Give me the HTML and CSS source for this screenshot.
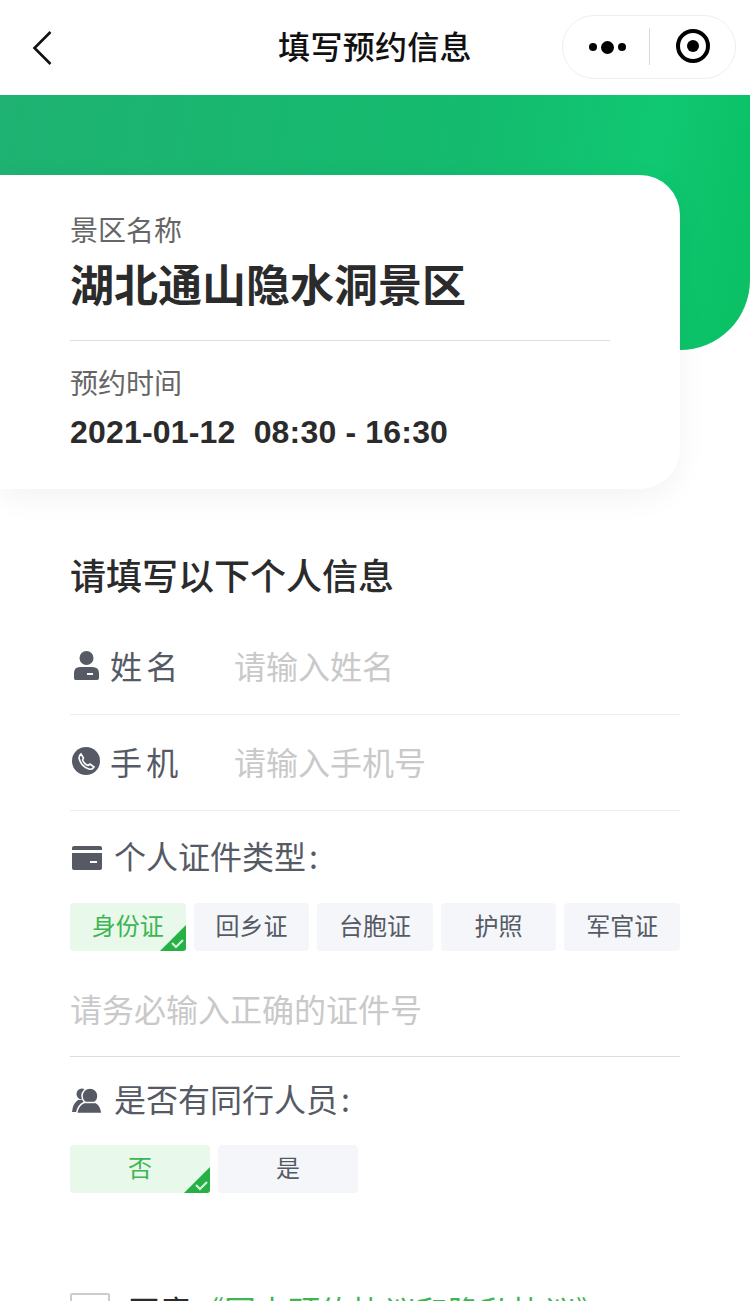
FILE: index.html
```html
<!DOCTYPE html>
<html>
    <head>
        <title>填写预约信息</title>
        <link rel="stylesheet" href="styles.css">
    </head>
    <body>
        <div class="page">
            <div class="navbar">
                <svg class="back" width="20" height="34" viewBox="0 0 20 34"><path d="M18.5 1 L2.5 17 L18.5 33" fill="none" stroke="#111" stroke-width="2.6"/></svg>
                <div class="nav-title">填写预约信息</div>
                <div class="capsule">
                    <div class="capsule-dots">
                        <span class="dot"></span><span class="dot dot-big"></span><span class="dot"></span>
                    </div>
                    <div class="capsule-line"></div>
                    <div class="capsule-target"><span></span></div>
                </div>
            </div>

            <div class="hero">
                <div class="hero-green"></div>
                <div class="card">
                    <div class="card-label">景区名称</div>
                    <div class="card-name">湖北通山隐水洞景区</div>
                    <hr class="card-line">
                    <div class="card-label card-label-time">预约时间</div>
                    <div class="card-time">2021-01-12&nbsp;&nbsp;08:30 - 16:30</div>
                </div>
            </div>

            <form class="info-form">
                <h2 class="form-title">请填写以下个人信息</h2>

                <div class="row">
                    <svg class="icon" width="28" height="30" viewBox="0 0 28 30"><circle cx="14.5" cy="8" r="7" fill="#555a65"/><path d="M3.5 30 Q2 30 2 28 V23 Q2 17 8 17 H20 Q27 17 27 23 V28 Q27 30 25 30 Z" fill="#555a65"/><rect x="15" y="23" width="6" height="2" fill="#fff"/></svg>
                    <label class="row-label">姓 名</label>
                    <span class="placeholder">请输入姓名</span>
                </div>
                <div class="row row-phone">
                    <svg class="icon" width="28" height="28" viewBox="0 0 28 28"><circle cx="14" cy="14" r="14" fill="#555a65"/><path d="M9 7 L11.5 11 L10.5 13 Q12 17 16 18.5 L18 17 L22 20 Q20 23 17 22 Q9 19.5 7 11 Q7 8.5 9 7 Z" fill="none" stroke="#fff" stroke-width="1.6"/></svg>
                    <label class="row-label">手 机</label>
                    <span class="placeholder">请输入手机号</span>
                </div>

                <div class="sub-title sub-title-id">
                    <svg class="icon-wide" width="30" height="24" viewBox="0 0 30 24"><path d="M2 0 H28 Q30 0 30 2 V4 H0 V2 Q0 0 2 0 Z M0 7 H30 V22 Q30 24 28 24 H2 Q0 24 0 22 Z" fill="#555a65"/><rect x="18" y="15" width="7" height="2" fill="#fff"/></svg>
                    <span>个人证件类型<span class="colon">:</span></span>
                </div>
                <div class="chips chips-id">
                    <div class="chip chip-on">身份证
                        <svg class="chip-tick" width="26" height="26" viewBox="0 0 26 26"><path d="M26 0 V23 Q26 26 23 26 H0 Z" fill="#25b143"/><path d="M12 18 L16 22 L23 15" fill="none" stroke="#d6f2dc" stroke-width="2.2"/></svg>
                    </div>
                    <div class="chip">回乡证</div>
                    <div class="chip">台胞证</div>
                    <div class="chip">护照</div>
                    <div class="chip">军官证</div>
                </div>
                <div class="id-input"><span class="placeholder">请务必输入正确的证件号</span></div>

                <div class="sub-title sub-title-with">
                    <svg class="icon-wide" width="30" height="26" viewBox="0 0 30 26"><circle cx="10" cy="6" r="5.5" fill="#555a65"/><path d="M0 24 Q1 15 6 12 H14 L14 24 Z" fill="#555a65"/><circle cx="18" cy="8" r="8" fill="#555a65" stroke="#fff" stroke-width="1.5"/><path d="M4.5 25.5 Q6 17 12 14.5 H24 Q29 17 30 25.5 Z" fill="#555a65" stroke="#fff" stroke-width="1.5"/></svg>
                    <span>是否有同行人员<span class="colon">:</span></span>
                </div>
                <div class="chips chips-with">
                    <div class="chip chip-wide chip-on">否
                        <svg class="chip-tick" width="26" height="26" viewBox="0 0 26 26"><path d="M26 0 V23 Q26 26 23 26 H0 Z" fill="#25b143"/><path d="M12 18 L16 22 L23 15" fill="none" stroke="#d6f2dc" stroke-width="2.2"/></svg>
                    </div>
                    <div class="chip chip-wide">是</div>
                </div>

                <div class="agree">
                    <span class="checkbox"></span>
                    <span class="agree-text">同意<a class="agree-link">《国内预约协议和隐私协议》</a></span>
                </div>
            </form>
        </div>
    </body>
</html>
```

FILE: styles.css
```css
* {
    box-sizing: border-box;
}

html, body {
    margin: 0;
    height: 100%;
}

body {
    font-family: "Noto Sans CJK SC", "Liberation Sans", sans-serif;
    background-color: #fff;
    color: #2b2b2b;
}

.page {
    width: 750px;
    height: 1301px;
    overflow: hidden;
}

/* top bar */
.navbar {
    height: 95px;
    display: flex;
    align-items: center;
    position: relative;
    padding: 0 14px 0 32px;
}

.nav-title {
    position: absolute;
    left: 0;
    right: 0;
    padding-bottom: 6px;
    text-align: center;
    font-size: 32px;
    font-weight: 500;
    letter-spacing: 0.3px;
    color: #111;
}

.capsule {
    margin-left: auto;
    margin-top: -1px;
    width: 174px;
    height: 64px;
    border: 1px solid #eee;
    border-radius: 32px;
    display: flex;
    align-items: center;
    position: relative;
}

.capsule-dots {
    width: 86px;
    display: flex;
    justify-content: center;
    align-items: center;
    gap: 4px;
    padding-left: 3px;
}

.dot {
    width: 8px;
    height: 8px;
    border-radius: 50%;
    background: #000;
}

.dot-big {
    width: 13px;
    height: 13px;
}

.capsule-line {
    width: 1px;
    height: 37px;
    margin-bottom: 2px;
    background: #d9d9d9;
}

.capsule-target {
    flex: 1;
    display: flex;
    justify-content: center;
    margin-bottom: 2px;
}

.capsule-target span {
    width: 34px;
    height: 34px;
    border: 4px solid #000;
    border-radius: 50%;
    display: flex;
    align-items: center;
    justify-content: center;
}

.capsule-target span::after {
    content: "";
    width: 12px;
    height: 12px;
    border-radius: 50%;
    background: #000;
}

/* green band and card */
.hero {
    position: relative;
    height: 394px;
}

.hero-green {
    height: 255px;
    border-bottom-right-radius: 70px;
    background: linear-gradient(100deg, #1fb272 0%, #14bb6e 60%, #10c872 84%, #0abf63 100%);
}

.card {
    position: absolute;
    left: 0;
    top: 80px;
    width: 680px;
    height: 314px;
    padding: 34px 70px 0;
    background: #fff;
    border-radius: 0 40px 40px 0;
    box-shadow: 0 8px 30px rgba(0, 0, 0, 0.05);
}

.card-label {
    font-size: 28px;
    line-height: 40px;
    color: #666;
}

.card-name {
    font-size: 44px;
    line-height: 64px;
    font-weight: 600;
    margin-top: 2px;
    color: #2b2b2b;
}

.card-line {
    border: none;
    border-top: 1px solid #ddd;
    margin: 25px 0 0;
}

.card-label-time {
    margin-top: 21px;
}

.card-time {
    font-family: "Liberation Sans", sans-serif;
    font-size: 32px;
    font-weight: 700;
    letter-spacing: 0.18px;
    line-height: 40px;
    margin-top: 10px;
}

/* form */
.info-form {
    padding: 0 70px;
}

.form-title {
    margin: 60px 0 0;
    font-size: 36px;
    line-height: 50px;
    font-weight: 500;
    color: #2b2b2b;
}

.row {
    height: 96px;
    padding-bottom: 4px;
    display: flex;
    align-items: center;
    border-bottom: 1px solid #eee;
    margin-top: 20px;
}

.row-phone {
    margin-top: 0;
}

.icon {
    margin: 0 10px 0 2px;
}

.row-label {
    width: 124px;
    font-size: 32px;
    word-spacing: -3px;
    color: #555a65;
}

.placeholder {
    font-size: 32px;
    color: #c9c9c9;
}

.sub-title {
    display: flex;
    align-items: center;
    font-size: 32px;
    line-height: 44px;
    color: #555a65;
}

.sub-title-id {
    margin-top: 22px;
}

.sub-title-with {
    margin-top: 19px;
}

.icon-wide {
    margin: 6px 12px 0 2px;
}

.colon {
    margin-left: 3px;
}

.chips {
    display: flex;
    gap: 8px;
}

.chips-id {
    margin-top: 26px;
}

.chips-with {
    margin-top: 25px;
}

.chip {
    position: relative;
    flex: 1;
    height: 48px;
    display: flex;
    align-items: center;
    justify-content: center;
    padding-bottom: 6px;
    font-size: 24px;
    color: #555a65;
    background: #f4f6f9;
    border-radius: 4px;
}

.chip-wide {
    flex: none;
    width: 140px;
}

.chip-on {
    background: #e8f8ea;
    color: #3cb552;
}

.chip-tick {
    position: absolute;
    right: 0;
    bottom: 0;
}

.id-input {
    height: 106px;
    padding-top: 8px;
    display: flex;
    align-items: center;
    border-bottom: 1px solid #ddd;
}

.agree {
    display: flex;
    align-items: flex-start;
    gap: 18px;
    margin-top: 100px;
    font-size: 32px;
    line-height: 40px;
    color: #2b2b2b;
}

.agree-text {
    margin-top: -3px;
}

.checkbox {
    width: 40px;
    height: 40px;
    border: 2px solid #ccc;
    border-radius: 2px;
}

.agree-link {
    color: #3cb552;
}
```
